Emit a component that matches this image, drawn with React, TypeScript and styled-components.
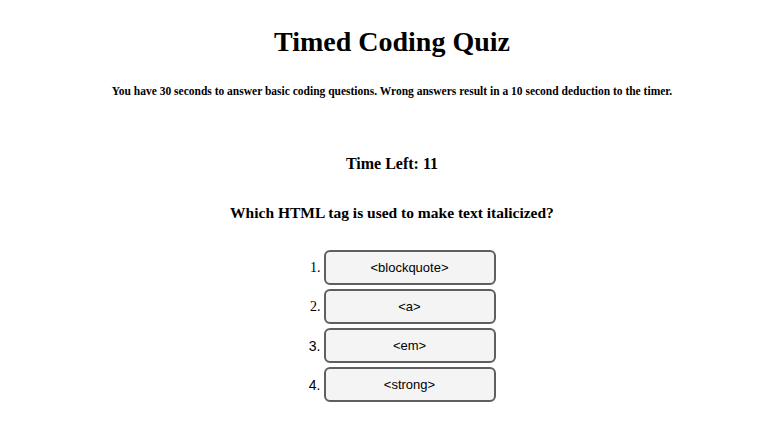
import React, { FC } from "react";
import styled, { createGlobalStyle } from "styled-components";

const GlobalStyle = createGlobalStyle`
  html, body {
    margin: 0;
    padding: 0;
    background: #ffffff;
    color: #000000;
    font-family: "Liberation Serif", "Times New Roman", serif;
  }
`;

const Page = styled("div")`
  display: flex;
  flex-direction: column;
  align-items: center;
  width: 784px;
  height: 422px;
  overflow: hidden;
`;

const Title = styled("h1")`
  margin: 25px 0 0;
  font-size: 28px;
  line-height: 34px;
  font-weight: bold;
`;

const Intro = styled("p")`
  margin: 25px 0 0;
  font-size: 11.5px;
  line-height: 14px;
  font-weight: bold;
`;

const Timer = styled("h3")`
  margin: 56px 0 0;
  font-size: 16px;
  line-height: 20px;
  font-weight: bold;
`;

const Question = styled("h3")`
  margin: 29px 0 0;
  font-size: 15.5px;
  line-height: 20px;
  font-weight: bold;
`;

const Choices = styled("ol")`
  list-style: none;
  margin: 27px 0 0;
  padding: 0;
  display: flex;
  flex-direction: column;
  gap: 4px;
`;

const Choice = styled("li")`
  display: flex;
  align-items: center;
  gap: 3px;
`;

const Num = styled("span")<{ $sans?: boolean }>`
  width: 32px;
  text-align: right;
  font-size: 14px;
  font-family: ${(p) =>
    p.$sans ? '"Liberation Sans", Arial, sans-serif' : '"Liberation Serif", serif'};
`;

const AnswerButton = styled("button")`
  width: 172px;
  height: 35px;
  padding: 0;
  border: 2px solid #5f5f5f;
  border-radius: 6px;
  background: #f4f4f4;
  color: #000000;
  font-family: "Liberation Sans", Arial, sans-serif;
  font-size: 13px;
  cursor: pointer;
`;

const answers = ["<blockquote>", "<a>", "<em>", "<strong>"];

export const App: FC = () => {
  return (
    <Page>
      <GlobalStyle />
      <Title>Timed Coding Quiz</Title>
      <Intro>
        You have 30 seconds to answer basic coding questions. Wrong answers
        result in a 10 second deduction to the timer.
      </Intro>
      <Timer>Time Left: 11</Timer>
      <Question>Which HTML tag is used to make text italicized?</Question>
      <Choices>
        {answers.map((a, i) => (
          <Choice key={a}>
            <Num $sans={i > 1}>{i + 1}.</Num>
            <AnswerButton>{a}</AnswerButton>
          </Choice>
        ))}
      </Choices>
    </Page>
  );
};

export default App;
